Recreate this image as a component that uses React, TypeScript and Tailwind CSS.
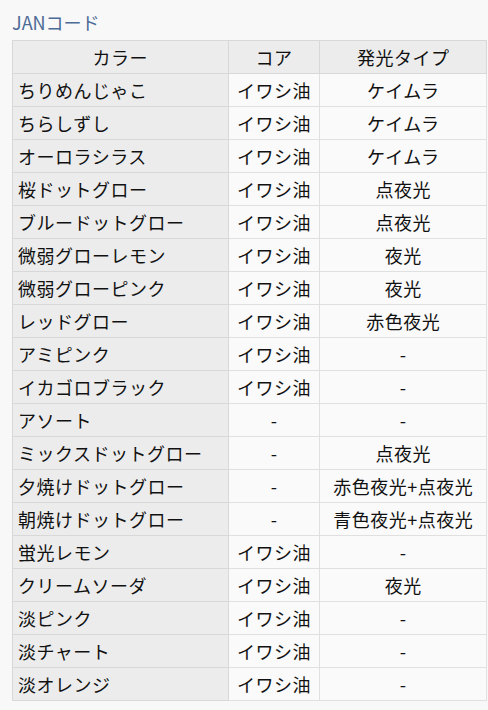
import React from "react";

const rows: [string, string, string][] = [
  ["ちりめんじゃこ", "イワシ油", "ケイムラ"],
  ["ちらしずし", "イワシ油", "ケイムラ"],
  ["オーロラシラス", "イワシ油", "ケイムラ"],
  ["桜ドットグロー", "イワシ油", "点夜光"],
  ["ブルードットグロー", "イワシ油", "点夜光"],
  ["微弱グローレモン", "イワシ油", "夜光"],
  ["微弱グローピンク", "イワシ油", "夜光"],
  ["レッドグロー", "イワシ油", "赤色夜光"],
  ["アミピンク", "イワシ油", "-"],
  ["イカゴロブラック", "イワシ油", "-"],
  ["アソート", "-", "-"],
  ["ミックスドットグロー", "-", "点夜光"],
  ["夕焼けドットグロー", "-", "赤色夜光+点夜光"],
  ["朝焼けドットグロー", "-", "青色夜光+点夜光"],
  ["蛍光レモン", "イワシ油", "-"],
  ["クリームソーダ", "イワシ油", "夜光"],
  ["淡ピンク", "イワシ油", "-"],
  ["淡チャート", "イワシ油", "-"],
  ["淡オレンジ", "イワシ油", "-"],
];

const App: React.FC = () => {
  return (
    <div
      className="min-h-[710px] bg-[#f8f8f8] pl-3 pt-[8px] text-[18px] text-[#111]"
      style={{ fontFamily: '"Noto Sans CJK JP", "Noto Sans", sans-serif' }}
    >
      <div className="h-[32px] text-[18px] leading-[28px] text-[#4b6a95]">JANコード</div>
      <table className="w-[475px] border-collapse tracking-[0.5px]">
        <colgroup>
          <col className="w-[216px]" />
          <col className="w-[92px]" />
          <col className="w-[167px]" />
        </colgroup>
        <thead>
          <tr className="h-[33px] bg-[#ececec]">
            <th className="border border-[#d8d8d8] p-0 text-center font-normal leading-[26px]">カラー</th>
            <th className="border border-[#d8d8d8] p-0 text-center font-normal leading-[26px]">コア</th>
            <th className="border border-[#d8d8d8] p-0 text-center font-normal leading-[26px]">発光タイプ</th>
          </tr>
        </thead>
        <tbody>
          {rows.map(([name, core, glow]) => (
            <tr key={name} className="h-[33px]">
              <td className="whitespace-nowrap border border-[#d8d8d8] bg-[#ececec] px-[5px] py-0 text-left leading-[26px]">
                {name}
              </td>
              <td className="whitespace-nowrap border border-[#e0e0e0] bg-[#fafafa] p-0 text-center leading-[26px]">{core}</td>
              <td className="whitespace-nowrap border border-[#e0e0e0] bg-[#fafafa] p-0 text-center leading-[26px]">{glow}</td>
            </tr>
          ))}
        </tbody>
      </table>
    </div>
  );
};

export default App;
